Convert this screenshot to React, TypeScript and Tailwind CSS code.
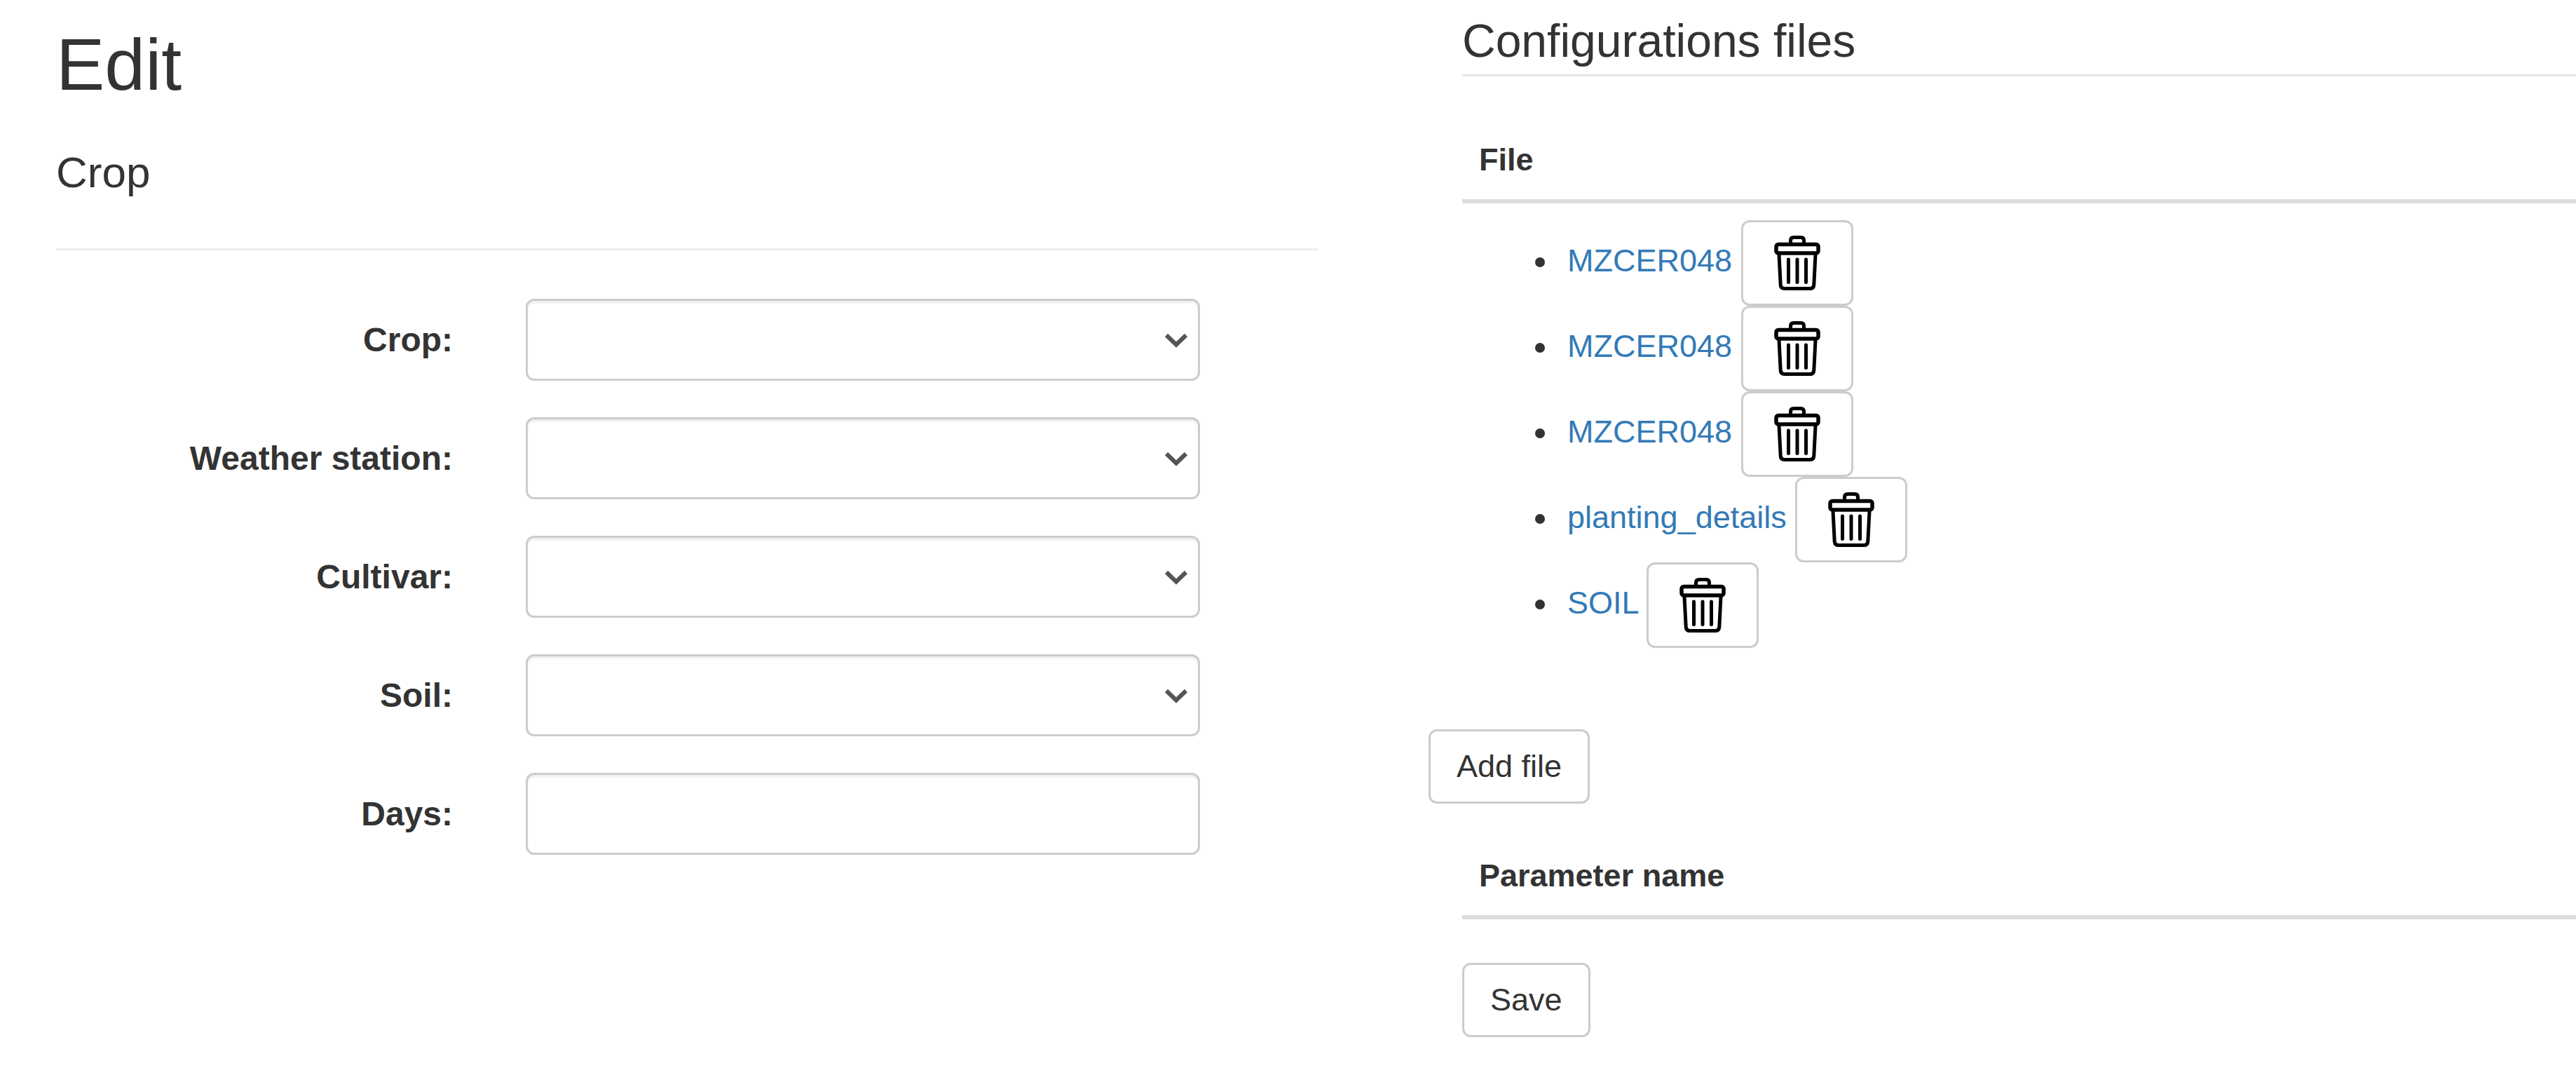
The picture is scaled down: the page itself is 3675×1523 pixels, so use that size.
import React from "react";

const selects = [
  { id: "crop", label: "Crop:" },
  { id: "station", label: "Weather station:" },
  { id: "cultivar", label: "Cultivar:" },
  { id: "soil", label: "Soil:" },
];

const files = ["MZCER048", "MZCER048", "MZCER048", "planting_details", "SOIL"];

const field =
  "block w-full h-[117px] appearance-none rounded-xl border-3 border-[#ccc] bg-white px-10 text-[45px] text-[#555] shadow-[inset_0_3px_3px_rgba(0,0,0,0.075)]";
const label = "text-right text-5xl/[64px] font-bold";
const button =
  "rounded-xl border-3 border-[#ccc] bg-white text-[45px]/[64px] text-[#333]";

function TrashIcon() {
  return (
    <svg
      className="h-20 w-[66px]"
      viewBox="0 0 66 80"
      fill="none"
      stroke="#000"
      strokeLinecap="round"
      strokeLinejoin="round"
      aria-hidden="true"
    >
      <path d="M23.500 12V8q0-4.500 4.500-4.500h10q4.500 0 4.500 4.500v4" strokeWidth="5" />
      <rect x="3" y="13.500" width="60" height="12.500" rx="3" strokeWidth="5.500" />
      <path d="M7 28l2.200 43q.3 5.500 5.800 5.500h36q5.500 0 5.800-5.500l2.200-43" strokeWidth="5" />
      <path d="M20.500 35v32.500M33 35v32.500M45.500 35v32.500" strokeWidth="5" />
    </svg>
  );
}

function SelectField({ id, text }: { id: string; text: string }) {
  return (
    <>
      <label htmlFor={id} className={label}>
        {text}
      </label>
      <div className="relative">
        <select id={id} className={field} />
        <svg
          className="pointer-events-none absolute top-1/2 right-4 h-6 w-9 -translate-y-1/2"
          viewBox="0 0 36 24"
          fill="none"
          stroke="#555"
          strokeWidth="6"
          aria-hidden="true"
        >
          <path d="M4 5l14 13.500L32 5" />
        </svg>
      </div>
    </>
  );
}

export default function App() {
  return (
    <main className="grid grid-cols-[1801fr_1589fr] gap-x-[205px] overflow-hidden bg-white pb-11 pl-20 font-['Liberation_Sans',Arial,sans-serif] text-[45px]/[64px] text-[#333]">
      <section className="pt-[34px]">
        <h1 className="text-[104px]/[116px]">Edit</h1>
        <h2 className="mt-[61px] text-[62px]/[70px]">Crop</h2>
        <hr className="mt-[73px] border-t-3 border-[#eee]" />
        <form className="mt-[69px] grid grid-cols-[566fr_962fr] items-center gap-x-[104px] gap-y-[52px] pr-[169px]">
          {selects.map((s) => (
            <SelectField key={s.id} id={s.id} text={s.label} />
          ))}
          <label htmlFor="days" className={label}>
            Days:
          </label>
          <input id="days" type="text" className={field} />
        </form>
      </section>

      <section className="pt-[22px]">
        <h2 className="border-b-3 border-[#e5e5e5] pb-3 text-[66px]/[72px]">
          Configurations files
        </h2>
        <table className="mt-[87px] w-full">
          <thead>
            <tr>
              <th className="border-b-6 border-[#ddd] px-6 pb-6 text-left">File</th>
            </tr>
          </thead>
          <tbody>
            <tr>
              <td className="px-6 pt-6">
                <ul className="list-disc pl-[114px]">
                  {files.map((name, i) => (
                    <li key={i} className="h-[122px] pl-3">
                      <a href="#" className="text-[#337ab7]">
                        {name}
                      </a>{" "}
                      <button
                        type="button"
                        aria-label={`Delete ${name}`}
                        className="inline-flex h-[122px] w-40 items-center justify-center rounded-xl border-3 border-[#ccc] bg-white align-middle"
                      >
                        <TrashIcon />
                      </button>
                    </li>
                  ))}
                </ul>
              </td>
            </tr>
          </tbody>
        </table>
        <button type="button" className={`${button} mt-[116px] -ml-12 block px-[37px] py-[18px]`}>
          Add file
        </button>
        <table className="mt-[71px] w-full">
          <thead>
            <tr>
              <th className="border-b-6 border-[#ddd] px-6 pb-6 text-left">
                Parameter name
              </th>
            </tr>
          </thead>
        </table>
        <button type="button" className={`${button} mt-[62px] block px-[37px] py-[18px]`}>
          Save
        </button>
      </section>
    </main>
  );
}
